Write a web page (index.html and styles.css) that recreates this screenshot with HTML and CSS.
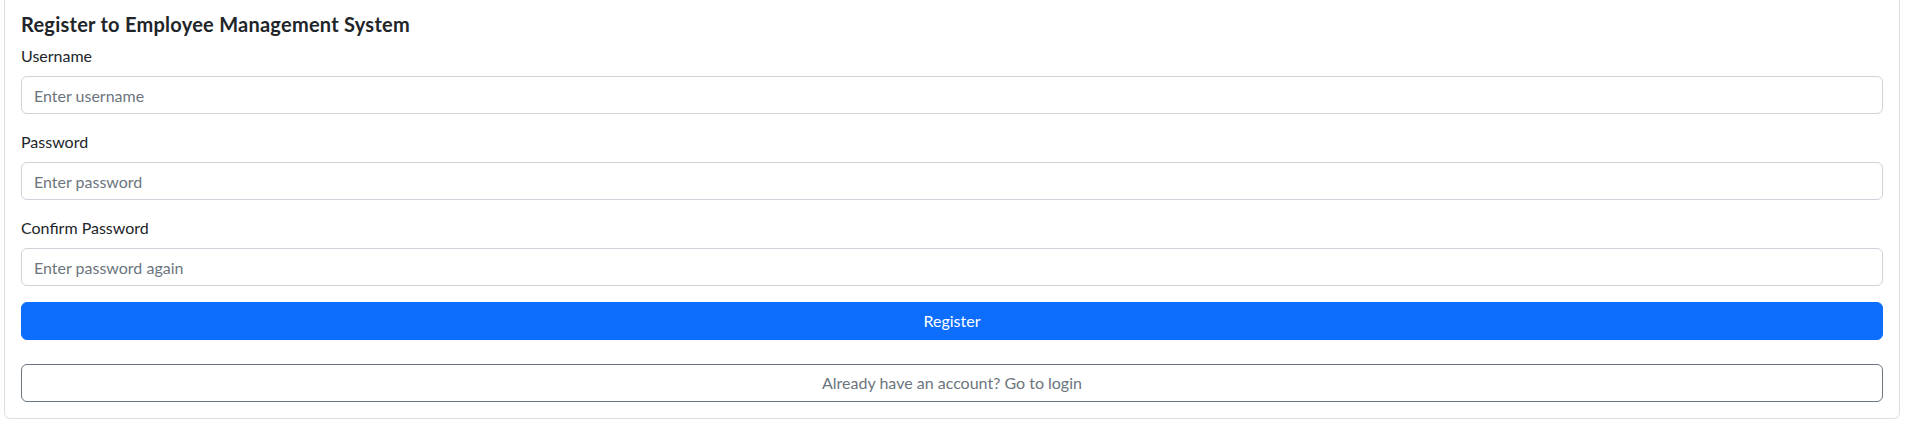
FILE: index.html
```html
<!DOCTYPE html>
<html lang="en">
<head>
<meta charset="utf-8">
<title>Register</title>
<link rel="stylesheet" href="styles.css">
</head>
<body>
<div class="page">
  <div class="card">
    <h5 class="title">Register to Employee Management System</h5>
    <form class="form">
      <div class="field">
        <label class="label" for="u">Username</label>
        <input class="input" id="u" type="text" placeholder="Enter username">
      </div>
      <div class="field">
        <label class="label" for="p">Password</label>
        <input class="input" id="p" type="password" placeholder="Enter password">
      </div>
      <div class="field">
        <label class="label" for="c">Confirm Password</label>
        <input class="input" id="c" type="password" placeholder="Enter password again">
      </div>
      <button class="btn btn-primary" type="button">Register</button>
      <button class="btn btn-outline" type="button">Already have an account? Go to login</button>
    </form>
  </div>
</div>
</body>
</html>
```
FILE: styles.css
```css
* { box-sizing: border-box; }
html, body { margin: 0; padding: 0; background: #fff; }
body {
  font-family: "Lato", "Open Sans", sans-serif;
  font-size: 16px;
  line-height: 1.5;
  color: #212529;
}
.page {
  padding: 0 11px 0 4px;
}
.card {
  border: 1px solid rgba(0,0,0,0.125);
  border-top: 0;
  border-radius: 0 0 6px 6px;
  padding: 12px 16px 16px;
}
.title {
  margin: 0 0 8px;
  font-size: 20px;
  font-weight: 700;
  line-height: 1.2;
  letter-spacing: 0.25px;
}
.form { display: flex; flex-direction: column; }
.field { margin-bottom: 16px; display: flex; flex-direction: column; }
.label { margin-bottom: 8px; }
.input {
  height: 38px;
  padding: 6px 12px;
  font: inherit;
  color: #212529;
  border: 1px solid #ced4da;
  border-radius: 6px;
  background: #fff;
}
.input::placeholder { color: #6c757d; opacity: 1; }
.btn {
  height: 38px;
  font: inherit;
  border-radius: 6px;
  padding: 6px 12px;
  text-align: center;
}
.btn-primary {
  background: #0d6efd;
  border: 1px solid #0d6efd;
  color: #fff;
  margin-bottom: 24px;
}
.btn-outline {
  background: #fff;
  border: 1px solid #6c757d;
  color: #6c757d;
}
```
